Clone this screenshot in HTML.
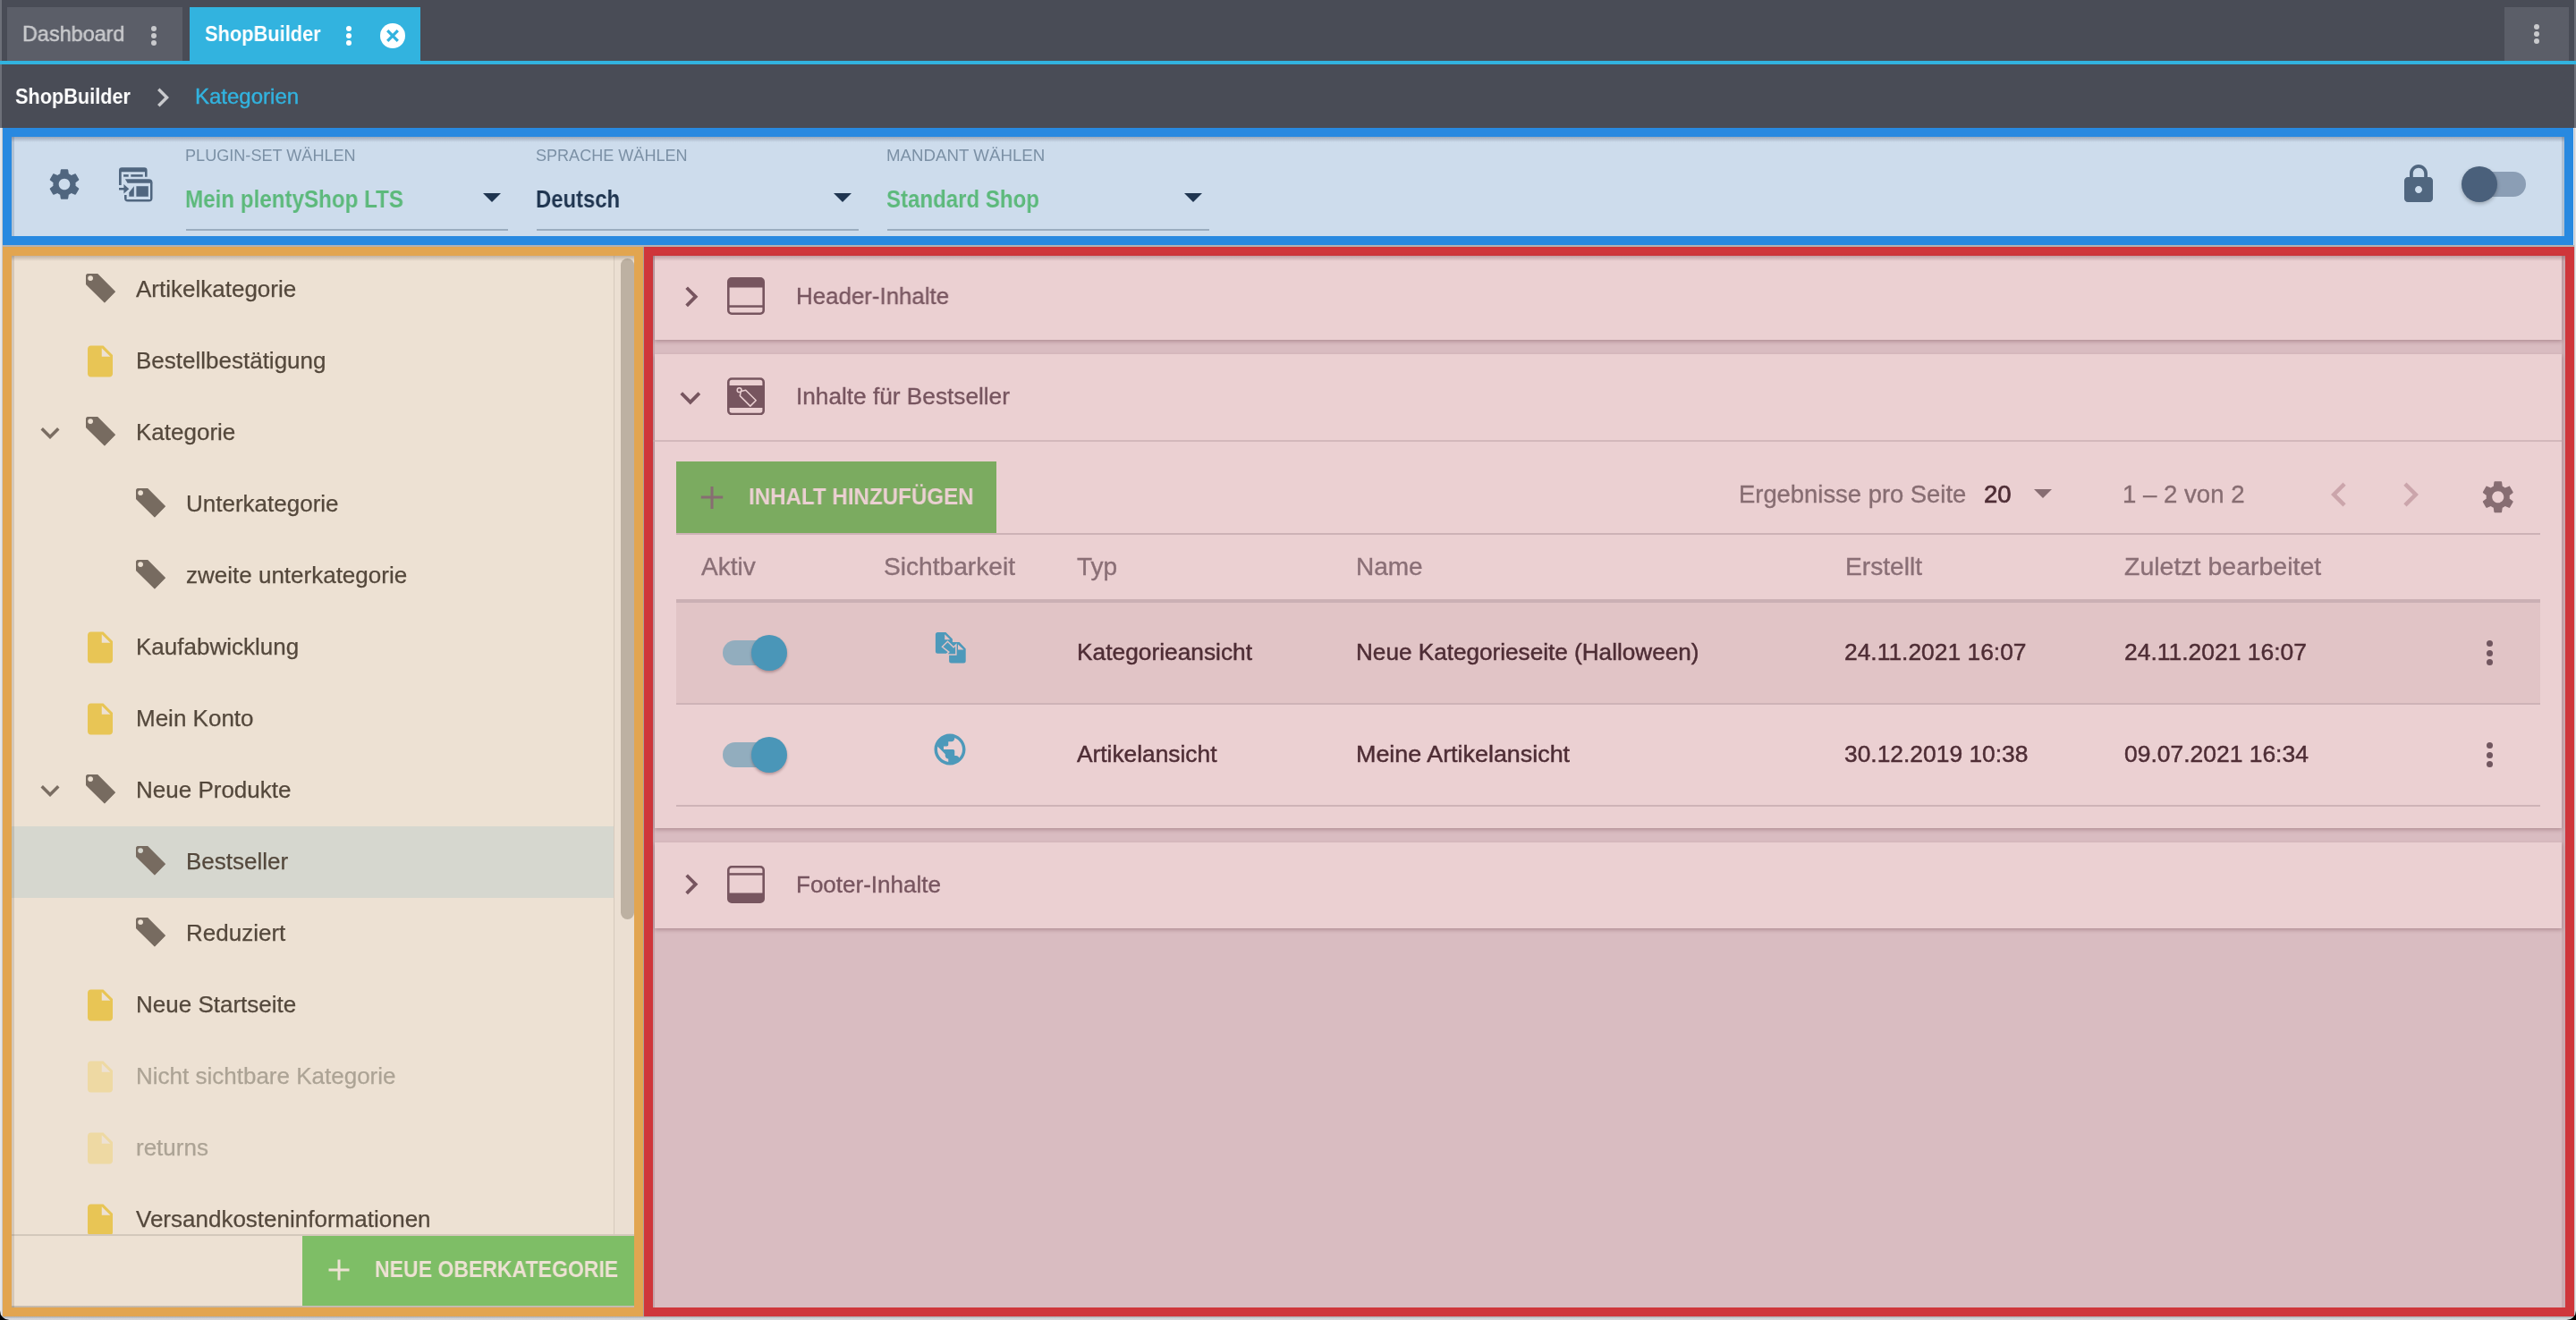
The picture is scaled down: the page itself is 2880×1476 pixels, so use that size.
<!DOCTYPE html>
<html><head><meta charset="utf-8"><title>ShopBuilder</title>
<style>
html,body{margin:0;padding:0;}
body{width:2880px;height:1476px;position:relative;overflow:hidden;background:#d9dadd;font-family:'Liberation Sans', sans-serif;}
div,svg{box-sizing:border-box;}
.t{position:absolute;white-space:nowrap;will-change:transform;}
</style></head><body>
<div style="position:absolute;left:0px;top:0px;width:2880px;height:143px;background:#494c56;"></div>
<div style="position:absolute;left:0px;top:0px;width:2px;height:143px;background:#6d7079;"></div>
<div style="position:absolute;left:2878px;top:0px;width:2px;height:143px;background:#6d7079;"></div>
<div style="position:absolute;left:8px;top:8px;width:196px;height:60px;background:#5b5e68;"></div>
<div style="position:absolute;left:212px;top:8px;width:258px;height:60px;background:#32b3df;"></div>
<div style="position:absolute;left:0px;top:68px;width:2880px;height:4px;background:#32b3df;"></div>
<div style="position:absolute;left:2800px;top:8px;width:72px;height:60px;background:#5b5e68;"></div>
<div class="t" style="left:24.5px;top:25.68px;font-size:24px;line-height:24px;font-weight:400;color:#c9cacd;transform:scaleX(0.975);transform-origin:0 0;-webkit-text-stroke:0.5px #c9cacd;">Dashboard</div>
<div style="position:absolute;left:168.90px;top:28.60px;width:6.2px;height:6.2px;border-radius:50%;background:#c9cacd;"></div>
<div style="position:absolute;left:168.90px;top:36.90px;width:6.2px;height:6.2px;border-radius:50%;background:#c9cacd;"></div>
<div style="position:absolute;left:168.90px;top:45.20px;width:6.2px;height:6.2px;border-radius:50%;background:#c9cacd;"></div>
<div class="t" style="left:229px;top:25.88px;font-size:24px;line-height:24px;font-weight:700;color:#ffffff;transform:scaleX(0.909);transform-origin:0 0;">ShopBuilder</div>
<div style="position:absolute;left:386.70px;top:28.70px;width:6.6px;height:6.6px;border-radius:50%;background:#ffffff;"></div>
<div style="position:absolute;left:386.70px;top:36.70px;width:6.6px;height:6.6px;border-radius:50%;background:#ffffff;"></div>
<div style="position:absolute;left:386.70px;top:44.70px;width:6.6px;height:6.6px;border-radius:50%;background:#ffffff;"></div>
<div style="position:absolute;left:425.00px;top:26.00px;width:28px;height:28px;border-radius:50%;background:#ffffff;"></div>
<svg style="position:absolute;left:425px;top:26px;" width="28" height="28" viewBox="0 0 28 28"><path d="M8.2 8.2 L19.8 19.8 M19.8 8.2 L8.2 19.8" stroke="#32b3df" stroke-width="3.2" stroke-linecap="butt"/></svg>
<div style="position:absolute;left:2833.00px;top:27.00px;width:6px;height:6px;border-radius:50%;background:#c9cacd;"></div>
<div style="position:absolute;left:2833.00px;top:35.00px;width:6px;height:6px;border-radius:50%;background:#c9cacd;"></div>
<div style="position:absolute;left:2833.00px;top:43.00px;width:6px;height:6px;border-radius:50%;background:#c9cacd;"></div>
<div class="t" style="left:17px;top:96.08px;font-size:24px;line-height:24px;font-weight:700;color:#ffffff;transform:scaleX(0.904);transform-origin:0 0;">ShopBuilder</div>
<svg style="position:absolute;left:161px;top:87.5px;" width="42" height="42" viewBox="0 0 24 24"><path d="M10 6L8.59 7.41 13.17 12l-4.58 4.59L10 18l6-6z" fill="#c9cacd"/></svg>
<div class="t" style="left:218.3px;top:96.08px;font-size:24px;line-height:24px;font-weight:400;color:#32b3df;-webkit-text-stroke:0.4px #32b3df;">Kategorien</div>
<div style="position:absolute;left:0px;top:143px;width:3px;height:1333px;background:#e6e7ea;"></div>
<div style="position:absolute;left:2px;top:143px;width:1px;height:1329px;background:#c9cacc;"></div>
<div style="position:absolute;left:2877px;top:143px;width:3px;height:1333px;background:#e6e7ea;"></div>
<div style="position:absolute;left:2878px;top:143px;width:1px;height:1329px;background:#c9cacc;"></div>
<div style="position:absolute;left:0px;top:1472px;width:2880px;height:4px;background:linear-gradient(#a9abae,#d3d4d7 60%,#d8d9dc);"></div>
<div style="position:absolute;left:3px;top:143px;width:2874px;height:131px;background:#cddcec;border:10px solid #2889e0;"></div>
<div style="position:absolute;left:3px;top:274px;width:2875px;height:2px;background:#b3b2b2;"></div>
<div style="position:absolute;left:13px;top:153px;width:2854px;height:6px;background:linear-gradient(rgba(40,50,70,0.30), rgba(40,50,70,0));"></div>
<div style="position:absolute;left:13px;top:153px;width:3px;height:111px;background:rgba(40,60,90,0.17);"></div>
<div style="position:absolute;left:2864px;top:153px;width:3px;height:111px;background:rgba(40,60,90,0.17);"></div>
<svg style="position:absolute;left:51px;top:185px;" width="42" height="42" viewBox="0 0 24 24"><path d="M19.14,12.94c0.04-0.3,0.06-0.61,0.06-0.94c0-0.32-0.02-0.64-0.07-0.94l2.03-1.58c0.18-0.14,0.23-0.41,0.12-0.61 l-1.92-3.32c-0.12-0.22-0.37-0.29-0.59-0.22l-2.39,0.96c-0.5-0.38-1.03-0.7-1.62-0.94L14.4,2.81c-0.04-0.24-0.24-0.41-0.48-0.41 h-3.84c-0.24,0-0.43,0.17-0.47,0.41L9.25,5.35C8.66,5.59,8.12,5.92,7.63,6.29L5.24,5.33c-0.22-0.08-0.47,0-0.59,0.22L2.74,8.87 C2.62,9.08,2.66,9.34,2.86,9.48l2.03,1.58C4.84,11.36,4.8,11.69,4.8,12s0.02,0.64,0.07,0.94l-2.03,1.58 c-0.18,0.14-0.23,0.41-0.12,0.61l1.92,3.32c0.12,0.22,0.37,0.29,0.59,0.22l2.39-0.96c0.5,0.38,1.03,0.7,1.62,0.94l0.36,2.54 c0.05,0.24,0.24,0.41,0.48,0.41h3.84c0.24,0,0.44-0.17,0.47-0.41l0.36-2.54c0.59-0.24,1.13-0.56,1.62-0.94l2.39,0.96 c0.22,0.08,0.47,0,0.59-0.22l1.92-3.32c0.12-0.22,0.07-0.47-0.12-0.61L19.14,12.94z M12,15.6c-1.98,0-3.6-1.62-3.6-3.6 s1.62-3.6,3.6-3.6s3.6,1.62,3.6,3.6S13.98,15.6,12,15.6z" fill="#50667f"/></svg>
<svg style="position:absolute;left:128px;top:182px;" width="48" height="48" viewBox="128 182 48 48">
<g fill="#50667f">
<path d="M133 207 V190.4 A3.2 3.2 0 0 1 136.2 187.2 H161.4 A3.2 3.2 0 0 1 164.6 190.4 V197.7 H162 V192.2 H135.7 V207 Z"/>
<rect x="138.1" y="195.1" width="5.6" height="2.6"/>
<rect x="146.3" y="195.1" width="13.4" height="2.6"/>
</g>
<path d="M137.6 198.6 H173 V228 H137.6 Z" fill="#cddcec"/>
<g fill="#50667f">
<path d="M139.9 200.3 H166.5 A4 4 0 0 1 170.5 204.3 V204.7 H142.6 Z"/>
<path d="M170.5 204.3 V221.5 A4 4 0 0 1 166.5 225.5 H143 A4 4 0 0 1 139 221.5 V218.1 H141.6 V223 H168 V204.3 Z"/>
<path d="M149.8 208.2 V219.8 H144.3 V215.2 Z"/>
<rect x="152.4" y="208.2" width="13.4" height="11.6"/>
</g>
<path d="M133 209.9 H138.4 V205.9 L144.3 211.2 L138.4 216.6 V212.4 H133 Z" fill="#50667f" stroke="#cddcec" stroke-width="2.2" paint-order="stroke"/>
</svg>
<div class="t" style="left:207.4px;top:165.46px;font-size:18px;line-height:18px;font-weight:400;color:#7b90a5;transform:scaleX(1.005);transform-origin:0 0;">PLUGIN-SET WÄHLEN</div>
<div class="t" style="left:207.2px;top:209.64px;font-size:27px;line-height:27px;font-weight:700;color:#5cb97b;transform:scaleX(0.89534);transform-origin:0 0;">Mein plentyShop LTS</div>
<svg style="position:absolute;left:540px;top:216px;" width="20" height="10" viewBox="0 0 20 10"><path d="M0 0 H20 L10 10z" fill="#1f3550"/></svg>
<div style="position:absolute;left:208px;top:256px;width:360px;height:2px;background:#9badbf;"></div>
<div class="t" style="left:599.4px;top:165.46px;font-size:18px;line-height:18px;font-weight:400;color:#7b90a5;transform:scaleX(1.003);transform-origin:0 0;">SPRACHE WÄHLEN</div>
<div class="t" style="left:599.2px;top:209.64px;font-size:27px;line-height:27px;font-weight:700;color:#1f3550;transform:scaleX(0.883268);transform-origin:0 0;">Deutsch</div>
<svg style="position:absolute;left:932px;top:216px;" width="20" height="10" viewBox="0 0 20 10"><path d="M0 0 H20 L10 10z" fill="#1f3550"/></svg>
<div style="position:absolute;left:600px;top:256px;width:360px;height:2px;background:#9badbf;"></div>
<div class="t" style="left:991.4px;top:165.46px;font-size:18px;line-height:18px;font-weight:400;color:#7b90a5;transform:scaleX(1.039);transform-origin:0 0;">MANDANT WÄHLEN</div>
<div class="t" style="left:991.2px;top:209.64px;font-size:27px;line-height:27px;font-weight:700;color:#5cb97b;transform:scaleX(0.89031);transform-origin:0 0;">Standard Shop</div>
<svg style="position:absolute;left:1324px;top:216px;" width="20" height="10" viewBox="0 0 20 10"><path d="M0 0 H20 L10 10z" fill="#1f3550"/></svg>
<div style="position:absolute;left:992px;top:256px;width:360px;height:2px;background:#9badbf;"></div>
<svg style="position:absolute;left:2680px;top:182px;" width="48" height="48" viewBox="0 0 24 24"><path d="M18 8h-1V6c0-2.76-2.24-5-5-5S7 3.24 7 6v2H6c-1.1 0-2 .9-2 2v10c0 1.1.9 2 2 2h12c1.1 0 2-.9 2-2V10c0-1.1-.9-2-2-2zm-6 9c-1.1 0-2-.9-2-2s.9-2 2-2 2 .9 2 2-.9 2-2 2zm3.1-9H8.9V6c0-1.71 1.39-3.1 3.1-3.1 1.71 0 3.1 1.39 3.1 3.1v2z" fill="#50667f"/></svg>
<div style="position:absolute;left:2768px;top:192px;width:56px;height:28px;background:#8b9eb5;border-radius:14px;"></div>
<div style="position:absolute;left:2752.00px;top:186.00px;width:40px;height:40px;border-radius:50%;background:#4a607b;box-shadow:0 2px 4px rgba(0,0,0,0.25);"></div>
<div style="position:absolute;left:3px;top:276px;width:716px;height:1196px;background:#ede1d3;border:10px solid #e2a550;"></div>
<div style="position:absolute;left:13px;top:286px;width:696px;height:1094px;overflow:hidden;">
<svg style="position:absolute;left:82px;top:19px;" width="35" height="35" viewBox="-1 -1 35 35"><path fill-rule="evenodd" fill="#776b60" stroke="#776b60" stroke-width="1.2" stroke-linejoin="round" d="M2.2 0.6 H13 L32.4 20.2 L20.9 31.9 L0.6 11.7 V2.2 A1.6 1.6 0 0 1 2.2 0.6 Z M5.1 1.6 A3.5 3.5 0 1 0 5.1 8.6 A3.5 3.5 0 1 0 5.1 1.6 Z"/></svg>
<div class="t" style="left:138.8px;top:23.99px;font-size:26px;line-height:26px;font-weight:400;color:#54483c;-webkit-text-stroke:0.25px #54483c;">Artikelkategorie</div>
<svg style="position:absolute;left:78px;top:96.80000000000001px;" width="42" height="42" viewBox="0 0 24 24"><path d="M6 2c-1.1 0-1.99.9-1.99 2L4 20c0 1.1.89 2 1.99 2H18c1.1 0 2-.9 2-2V8l-6-6H6zm7 7V3.5L18.5 9H13z" fill="#e8c555"/></svg>
<div class="t" style="left:138.8px;top:103.99px;font-size:26px;line-height:26px;font-weight:400;color:#54483c;-webkit-text-stroke:0.25px #54483c;">Bestellbestätigung</div>
<svg style="position:absolute;left:22px;top:177px;" width="42" height="42" viewBox="0 0 24 24"><path d="M16.59 8.59L12 13.17 7.41 8.59 6 10l6 6 6-6z" fill="#7a6d62"/></svg>
<svg style="position:absolute;left:82px;top:179px;" width="35" height="35" viewBox="-1 -1 35 35"><path fill-rule="evenodd" fill="#776b60" stroke="#776b60" stroke-width="1.2" stroke-linejoin="round" d="M2.2 0.6 H13 L32.4 20.2 L20.9 31.9 L0.6 11.7 V2.2 A1.6 1.6 0 0 1 2.2 0.6 Z M5.1 1.6 A3.5 3.5 0 1 0 5.1 8.6 A3.5 3.5 0 1 0 5.1 1.6 Z"/></svg>
<div class="t" style="left:138.8px;top:183.99px;font-size:26px;line-height:26px;font-weight:400;color:#54483c;-webkit-text-stroke:0.25px #54483c;">Kategorie</div>
<svg style="position:absolute;left:138px;top:259px;" width="35" height="35" viewBox="-1 -1 35 35"><path fill-rule="evenodd" fill="#776b60" stroke="#776b60" stroke-width="1.2" stroke-linejoin="round" d="M2.2 0.6 H13 L32.4 20.2 L20.9 31.9 L0.6 11.7 V2.2 A1.6 1.6 0 0 1 2.2 0.6 Z M5.1 1.6 A3.5 3.5 0 1 0 5.1 8.6 A3.5 3.5 0 1 0 5.1 1.6 Z"/></svg>
<div class="t" style="left:194.8px;top:263.99px;font-size:26px;line-height:26px;font-weight:400;color:#54483c;-webkit-text-stroke:0.25px #54483c;">Unterkategorie</div>
<svg style="position:absolute;left:138px;top:339px;" width="35" height="35" viewBox="-1 -1 35 35"><path fill-rule="evenodd" fill="#776b60" stroke="#776b60" stroke-width="1.2" stroke-linejoin="round" d="M2.2 0.6 H13 L32.4 20.2 L20.9 31.9 L0.6 11.7 V2.2 A1.6 1.6 0 0 1 2.2 0.6 Z M5.1 1.6 A3.5 3.5 0 1 0 5.1 8.6 A3.5 3.5 0 1 0 5.1 1.6 Z"/></svg>
<div class="t" style="left:194.8px;top:343.99px;font-size:26px;line-height:26px;font-weight:400;color:#54483c;-webkit-text-stroke:0.25px #54483c;">zweite unterkategorie</div>
<svg style="position:absolute;left:78px;top:416.79999999999995px;" width="42" height="42" viewBox="0 0 24 24"><path d="M6 2c-1.1 0-1.99.9-1.99 2L4 20c0 1.1.89 2 1.99 2H18c1.1 0 2-.9 2-2V8l-6-6H6zm7 7V3.5L18.5 9H13z" fill="#e8c555"/></svg>
<div class="t" style="left:138.8px;top:423.99px;font-size:26px;line-height:26px;font-weight:400;color:#54483c;-webkit-text-stroke:0.25px #54483c;">Kaufabwicklung</div>
<svg style="position:absolute;left:78px;top:496.79999999999995px;" width="42" height="42" viewBox="0 0 24 24"><path d="M6 2c-1.1 0-1.99.9-1.99 2L4 20c0 1.1.89 2 1.99 2H18c1.1 0 2-.9 2-2V8l-6-6H6zm7 7V3.5L18.5 9H13z" fill="#e8c555"/></svg>
<div class="t" style="left:138.8px;top:503.99px;font-size:26px;line-height:26px;font-weight:400;color:#54483c;-webkit-text-stroke:0.25px #54483c;">Mein Konto</div>
<svg style="position:absolute;left:22px;top:577px;" width="42" height="42" viewBox="0 0 24 24"><path d="M16.59 8.59L12 13.17 7.41 8.59 6 10l6 6 6-6z" fill="#7a6d62"/></svg>
<svg style="position:absolute;left:82px;top:579px;" width="35" height="35" viewBox="-1 -1 35 35"><path fill-rule="evenodd" fill="#776b60" stroke="#776b60" stroke-width="1.2" stroke-linejoin="round" d="M2.2 0.6 H13 L32.4 20.2 L20.9 31.9 L0.6 11.7 V2.2 A1.6 1.6 0 0 1 2.2 0.6 Z M5.1 1.6 A3.5 3.5 0 1 0 5.1 8.6 A3.5 3.5 0 1 0 5.1 1.6 Z"/></svg>
<div class="t" style="left:138.8px;top:583.99px;font-size:26px;line-height:26px;font-weight:400;color:#54483c;-webkit-text-stroke:0.25px #54483c;">Neue Produkte</div>
<div style="position:absolute;left:0px;top:638px;width:673px;height:80px;background:#d6d7cf;"></div>
<svg style="position:absolute;left:138px;top:659px;" width="35" height="35" viewBox="-1 -1 35 35"><path fill-rule="evenodd" fill="#776b60" stroke="#776b60" stroke-width="1.2" stroke-linejoin="round" d="M2.2 0.6 H13 L32.4 20.2 L20.9 31.9 L0.6 11.7 V2.2 A1.6 1.6 0 0 1 2.2 0.6 Z M5.1 1.6 A3.5 3.5 0 1 0 5.1 8.6 A3.5 3.5 0 1 0 5.1 1.6 Z"/></svg>
<div class="t" style="left:194.8px;top:663.99px;font-size:26px;line-height:26px;font-weight:400;color:#54483c;-webkit-text-stroke:0.25px #54483c;">Bestseller</div>
<svg style="position:absolute;left:138px;top:739px;" width="35" height="35" viewBox="-1 -1 35 35"><path fill-rule="evenodd" fill="#776b60" stroke="#776b60" stroke-width="1.2" stroke-linejoin="round" d="M2.2 0.6 H13 L32.4 20.2 L20.9 31.9 L0.6 11.7 V2.2 A1.6 1.6 0 0 1 2.2 0.6 Z M5.1 1.6 A3.5 3.5 0 1 0 5.1 8.6 A3.5 3.5 0 1 0 5.1 1.6 Z"/></svg>
<div class="t" style="left:194.8px;top:743.99px;font-size:26px;line-height:26px;font-weight:400;color:#54483c;-webkit-text-stroke:0.25px #54483c;">Reduziert</div>
<svg style="position:absolute;left:78px;top:816.8px;" width="42" height="42" viewBox="0 0 24 24"><path d="M6 2c-1.1 0-1.99.9-1.99 2L4 20c0 1.1.89 2 1.99 2H18c1.1 0 2-.9 2-2V8l-6-6H6zm7 7V3.5L18.5 9H13z" fill="#e8c555"/></svg>
<div class="t" style="left:138.8px;top:823.99px;font-size:26px;line-height:26px;font-weight:400;color:#54483c;-webkit-text-stroke:0.25px #54483c;">Neue Startseite</div>
<svg style="position:absolute;left:78px;top:896.8px;" width="42" height="42" viewBox="0 0 24 24"><path d="M6 2c-1.1 0-1.99.9-1.99 2L4 20c0 1.1.89 2 1.99 2H18c1.1 0 2-.9 2-2V8l-6-6H6zm7 7V3.5L18.5 9H13z" fill="#eed9a3"/></svg>
<div class="t" style="left:138.8px;top:903.99px;font-size:26px;line-height:26px;font-weight:400;color:#aca395;-webkit-text-stroke:0.25px #aca395;">Nicht sichtbare Kategorie</div>
<svg style="position:absolute;left:78px;top:976.8px;" width="42" height="42" viewBox="0 0 24 24"><path d="M6 2c-1.1 0-1.99.9-1.99 2L4 20c0 1.1.89 2 1.99 2H18c1.1 0 2-.9 2-2V8l-6-6H6zm7 7V3.5L18.5 9H13z" fill="#eed9a3"/></svg>
<div class="t" style="left:138.8px;top:983.99px;font-size:26px;line-height:26px;font-weight:400;color:#aca395;-webkit-text-stroke:0.25px #aca395;">returns</div>
<svg style="position:absolute;left:78px;top:1056.8px;" width="42" height="42" viewBox="0 0 24 24"><path d="M6 2c-1.1 0-1.99.9-1.99 2L4 20c0 1.1.89 2 1.99 2H18c1.1 0 2-.9 2-2V8l-6-6H6zm7 7V3.5L18.5 9H13z" fill="#e8c555"/></svg>
<div class="t" style="left:138.8px;top:1063.99px;font-size:26px;line-height:26px;font-weight:400;color:#54483c;-webkit-text-stroke:0.25px #54483c;">Versandkosteninformationen</div>
</div>
<div style="position:absolute;left:686px;top:286px;width:23px;height:1094px;background:#ebdfd2;border-left:1px solid #d6cabd;"></div>
<div style="position:absolute;left:694px;top:289px;width:15px;height:739px;background:#bdb1a2;border-radius:7.5px;"></div>
<div style="position:absolute;left:13px;top:1380px;width:696px;height:2px;background:#d3c8bb;"></div>
<div style="position:absolute;left:13px;top:1460px;width:696px;height:2px;background:linear-gradient(#cfc4b7,#bcb1a3);"></div>
<div style="position:absolute;left:338px;top:1382px;width:371px;height:78px;background:#7ebe66;"></div>
<svg style="position:absolute;left:365px;top:1406px;" width="28" height="28" viewBox="0 0 28 28"><path d="M14 2.5 V25.5 M2.5 14 H25.5" stroke="#ede1d3" stroke-width="3"/></svg>
<div class="t" style="left:419px;top:1405.99px;font-size:26px;line-height:26px;font-weight:700;color:#ede1d3;transform:scaleX(0.886);transform-origin:0 0;">NEUE OBERKATEGORIE</div>
<div style="position:absolute;left:13px;top:286px;width:696px;height:6px;background:linear-gradient(rgba(70,50,30,0.26), rgba(70,50,30,0));"></div>
<div style="position:absolute;left:13px;top:286px;width:3px;height:1176px;background:rgba(70,50,30,0.14);"></div>
<div style="position:absolute;left:720px;top:276px;width:2158px;height:1196px;background:#d9bcc1;border:10px solid #cf363b;"></div>
<div style="position:absolute;left:719px;top:276px;width:1px;height:1196px;background:#a99d97;"></div>
<div style="position:absolute;left:732px;top:286px;width:2132px;height:94px;background:#ebd0d2;box-shadow:0 2px 4px rgba(80,30,40,0.28);"></div>
<div style="position:absolute;left:732px;top:396px;width:2132px;height:530px;background:#ebd0d2;box-shadow:0 2px 4px rgba(80,30,40,0.28);"></div>
<div style="position:absolute;left:732px;top:942px;width:2132px;height:96px;background:#ebd0d2;box-shadow:0 2px 4px rgba(80,30,40,0.28);"></div>
<svg style="position:absolute;left:750px;top:309.1px;" width="45.6" height="45.6" viewBox="0 0 24 24"><path d="M10 6L8.59 7.41 13.17 12l-4.58 4.59L10 18l6-6z" fill="#77555f"/></svg>
<svg style="position:absolute;left:813px;top:309.7px;" width="42" height="42" viewBox="0 0 42 42"><g fill="#77555f" fill-rule="evenodd"><path d="M5 0 H37 A5 5 0 0 1 42 5 V37 A5 5 0 0 1 37 42 H5 A5 5 0 0 1 0 37 V5 A5 5 0 0 1 5 0z M2.6 11.5 V36.8 A2.6 2.6 0 0 0 5.2 39.4 H36.8 A2.6 2.6 0 0 0 39.4 36.8 V11.5z"/><rect x="2" y="31.3" width="38" height="2.5"/></g></svg>
<div class="t" style="left:889.5px;top:317.99px;font-size:26px;line-height:26px;font-weight:400;color:#77555f;transform:scaleX(0.995);transform-origin:0 0;-webkit-text-stroke:0.35px #77555f;">Header-Inhalte</div>
<svg style="position:absolute;left:748.7px;top:421.5px;" width="45.6" height="45.6" viewBox="0 0 24 24"><path d="M16.59 8.59L12 13.17 7.41 8.59 6 10l6 6 6-6z" fill="#77555f"/></svg>
<svg style="position:absolute;left:813px;top:421.7px;" width="42" height="42.5" viewBox="0 0 42 42"><g fill="#77555f" fill-rule="evenodd"><path d="M5 0 H37 A5 5 0 0 1 42 5 V37 A5 5 0 0 1 37 42 H5 A5 5 0 0 1 0 37 V5 A5 5 0 0 1 5 0z M2.6 5.2 A2.6 2.6 0 0 1 5.2 2.6 H36.8 A2.6 2.6 0 0 1 39.4 5.2 V8.8 H2.6z M2.6 33.8 H39.4 V36.8 A2.6 2.6 0 0 1 36.8 39.4 H5.2 A2.6 2.6 0 0 1 2.6 36.8z"/></g>
<g fill="none" stroke="#ebd0d2" stroke-width="1.5" stroke-linejoin="round"><path d="M15.4 15.2 L20.7 14 L32.2 25.5 L25.8 31.9 L14.3 20.4 Z"/><circle cx="13.6" cy="13.9" r="2.4"/></g></svg>
<div class="t" style="left:889.5px;top:430.49px;font-size:26px;line-height:26px;font-weight:400;color:#77555f;transform:scaleX(1.008);transform-origin:0 0;-webkit-text-stroke:0.35px #77555f;">Inhalte für Bestseller</div>
<div style="position:absolute;left:730px;top:492px;width:2134px;height:2px;background:#d3b8bb;"></div>
<div style="position:absolute;left:756px;top:516px;width:358px;height:80px;background:#7bab60;"></div>
<svg style="position:absolute;left:782px;top:542px;" width="28" height="28" viewBox="0 0 28 28"><path d="M14 2 V27 M1.8 14 H26.2" stroke="#876d72" stroke-width="3"/></svg>
<div class="t" style="left:837px;top:541.99px;font-size:26px;line-height:26px;font-weight:700;color:#ebd0d2;transform:scaleX(0.928);transform-origin:0 0;">INHALT HINZUFÜGEN</div>
<div class="t" style="left:1944px;top:538.81px;font-size:27.4px;line-height:27.4px;font-weight:400;color:#876d72;-webkit-text-stroke:0.35px #876d72;">Ergebnisse pro Seite</div>
<div class="t" style="left:2217.5px;top:538.72px;font-size:27.5px;line-height:27.5px;font-weight:400;color:#4e2d35;-webkit-text-stroke:0.7px #4e2d35;">20</div>
<svg style="position:absolute;left:2274px;top:546.5px;" width="20" height="10" viewBox="0 0 20 10"><path d="M0 0 H20 L10 10z" fill="#876d72"/></svg>
<div class="t" style="left:2372.5px;top:538.64px;font-size:27.6px;line-height:27.6px;font-weight:400;color:#876d72;-webkit-text-stroke:0.35px #876d72;">1 – 2 von 2</div>
<svg style="position:absolute;left:2588px;top:525.5px;" width="54" height="54" viewBox="0 0 24 24"><path d="M15.41 7.41L14 6l-6 6 6 6 1.41-1.41L10.83 12z" fill="#cba5ab"/></svg>
<svg style="position:absolute;left:2667.7px;top:525.5px;" width="54" height="54" viewBox="0 0 24 24"><path d="M10 6L8.59 7.41 13.17 12l-4.58 4.59L10 18l6-6z" fill="#cba5ab"/></svg>
<svg style="position:absolute;left:2770.5px;top:534px;" width="43.5" height="43.5" viewBox="0 0 24 24"><path d="M19.14,12.94c0.04-0.3,0.06-0.61,0.06-0.94c0-0.32-0.02-0.64-0.07-0.94l2.03-1.58c0.18-0.14,0.23-0.41,0.12-0.61 l-1.92-3.32c-0.12-0.22-0.37-0.29-0.59-0.22l-2.39,0.96c-0.5-0.38-1.03-0.7-1.62-0.94L14.4,2.81c-0.04-0.24-0.24-0.41-0.48-0.41 h-3.84c-0.24,0-0.43,0.17-0.47,0.41L9.25,5.35C8.66,5.59,8.12,5.92,7.63,6.29L5.24,5.33c-0.22-0.08-0.47,0-0.59,0.22L2.74,8.87 C2.62,9.08,2.66,9.34,2.86,9.48l2.03,1.58C4.84,11.36,4.8,11.69,4.8,12s0.02,0.64,0.07,0.94l-2.03,1.58 c-0.18,0.14-0.23,0.41-0.12,0.61l1.92,3.32c0.12,0.22,0.37,0.29,0.59,0.22l2.39-0.96c0.5,0.38,1.03,0.7,1.62,0.94l0.36,2.54 c0.05,0.24,0.24,0.41,0.48,0.41h3.84c0.24,0,0.44-0.17,0.47-0.41l0.36-2.54c0.59-0.24,1.13-0.56,1.62-0.94l2.39,0.96 c0.22,0.08,0.47,0,0.59-0.22l1.92-3.32c0.12-0.22,0.07-0.47-0.12-0.61L19.14,12.94z M12,15.6c-1.98,0-3.6-1.62-3.6-3.6 s1.62-3.6,3.6-3.6s3.6,1.62,3.6,3.6S13.98,15.6,12,15.6z" fill="#876d72"/></svg>
<div style="position:absolute;left:756px;top:596px;width:2084px;height:2px;background:#cdb2b6;"></div>
<div class="t" style="left:784.3px;top:619.90px;font-size:28px;line-height:28px;font-weight:400;color:#8a6f76;-webkit-text-stroke:0.35px #8a6f76;">Aktiv</div>
<div class="t" style="left:988px;top:619.90px;font-size:28px;line-height:28px;font-weight:400;color:#8a6f76;transform:scaleX(1.005);transform-origin:0 0;-webkit-text-stroke:0.35px #8a6f76;">Sichtbarkeit</div>
<div class="t" style="left:1204.3px;top:619.90px;font-size:28px;line-height:28px;font-weight:400;color:#8a6f76;-webkit-text-stroke:0.35px #8a6f76;">Typ</div>
<div class="t" style="left:1516px;top:619.90px;font-size:28px;line-height:28px;font-weight:400;color:#8a6f76;-webkit-text-stroke:0.35px #8a6f76;">Name</div>
<div class="t" style="left:2062.5px;top:619.90px;font-size:28px;line-height:28px;font-weight:400;color:#8a6f76;transform:scaleX(1.005);transform-origin:0 0;-webkit-text-stroke:0.35px #8a6f76;">Erstellt</div>
<div class="t" style="left:2375px;top:619.90px;font-size:28px;line-height:28px;font-weight:400;color:#8a6f76;transform:scaleX(1.018);transform-origin:0 0;-webkit-text-stroke:0.35px #8a6f76;">Zuletzt bearbeitet</div>
<div style="position:absolute;left:756px;top:670px;width:2084px;height:4px;background:#cbb0b4;"></div>
<div style="position:absolute;left:756px;top:674px;width:2084px;height:112px;background:#e1c4c6;"></div>
<div style="position:absolute;left:756px;top:786px;width:2084px;height:2px;background:#ceb3b7;"></div>
<div style="position:absolute;left:756px;top:900px;width:2084px;height:2px;background:#ceb3b7;"></div>
<div style="position:absolute;left:808px;top:716px;width:64px;height:28px;background:#92adbe;border-radius:14px;"></div>
<div style="position:absolute;left:840.00px;top:710.00px;width:40px;height:40px;border-radius:50%;background:#4a96b8;box-shadow:0 2px 3px rgba(60,20,30,0.3);"></div>
<svg style="position:absolute;left:1040px;top:700px;" width="46" height="46" viewBox="0 0 46 46"><g fill="#4d99ba" fill-rule="evenodd">
<path d="M8.4 7 H17.4 L24.9 14.6 V28.3 A2.5 2.5 0 0 1 22.4 30.8 H8.4 A2.5 2.5 0 0 1 5.9 28.3 V9.5 A2.5 2.5 0 0 1 8.4 7 Z M16.2 9.2 V15.3 H22.3 Z"/>
<path d="M23.6 18.1 H32.6 L39.7 25.4 V39.1 A2.5 2.5 0 0 1 37.2 41.6 H23.6 A2.5 2.5 0 0 1 21.1 39.1 V20.6 A2.5 2.5 0 0 1 23.6 18.1 Z M31 20.6 V26.5 H37.5 Z"/>
</g>
<path d="M13.4 23.3 L19.5 17.2 L26.1 23.8 L28.9 21 V31.9 H18 L20.8 29.1 Z" fill="#4d99ba" stroke="#e1c4c6" stroke-width="1.5" stroke-linejoin="miter"/></svg>
<div class="t" style="left:1203.5px;top:715.99px;font-size:26px;line-height:26px;font-weight:400;color:#4e2d35;transform:scaleX(1.012);transform-origin:0 0;-webkit-text-stroke:0.45px #4e2d35;">Kategorieansicht</div>
<div class="t" style="left:1515.8px;top:715.99px;font-size:26px;line-height:26px;font-weight:400;color:#4e2d35;transform:scaleX(1.005);transform-origin:0 0;-webkit-text-stroke:0.45px #4e2d35;">Neue Kategorieseite (Halloween)</div>
<div class="t" style="left:2062.2px;top:715.99px;font-size:26px;line-height:26px;font-weight:400;color:#4e2d35;transform:scaleX(1.015);transform-origin:0 0;-webkit-text-stroke:0.45px #4e2d35;">24.11.2021 16:07</div>
<div class="t" style="left:2374.5px;top:715.99px;font-size:26px;line-height:26px;font-weight:400;color:#4e2d35;transform:scaleX(1.017);transform-origin:0 0;-webkit-text-stroke:0.45px #4e2d35;">24.11.2021 16:07</div>
<div style="position:absolute;left:2779.90px;top:715.85px;width:7px;height:7px;border-radius:50%;background:#71565f;"></div>
<div style="position:absolute;left:2779.90px;top:726.50px;width:7px;height:7px;border-radius:50%;background:#71565f;"></div>
<div style="position:absolute;left:2779.90px;top:737.15px;width:7px;height:7px;border-radius:50%;background:#71565f;"></div>
<div style="position:absolute;left:808px;top:830px;width:64px;height:28px;background:#92adbe;border-radius:14px;"></div>
<div style="position:absolute;left:840.00px;top:824.00px;width:40px;height:40px;border-radius:50%;background:#4a96b8;box-shadow:0 2px 3px rgba(60,20,30,0.3);"></div>
<svg style="position:absolute;left:1041.2px;top:816.7px;" width="42" height="42" viewBox="0 0 24 24"><path d="M12 2C6.48 2 2 6.48 2 12s4.48 10 10 10 10-4.48 10-10S17.52 2 12 2zm-1 17.93c-3.95-.49-7-3.85-7-7.93 0-.62.08-1.21.21-1.79L9 15v1c0 1.1.9 2 2 2v1.93zm6.9-2.54c-.26-.81-1-1.39-1.9-1.39h-1v-3c0-.55-.45-1-1-1H8v-2h2c.55 0 1-.45 1-1V7h2c1.1 0 2-.9 2-2v-.41c2.93 1.19 5 4.06 5 7.41 0 2.08-.8 3.97-2.1 5.39z" fill="#4d99ba"/></svg>
<div class="t" style="left:1203.5px;top:829.99px;font-size:26px;line-height:26px;font-weight:400;color:#4e2d35;transform:scaleX(1.012);transform-origin:0 0;-webkit-text-stroke:0.45px #4e2d35;">Artikelansicht</div>
<div class="t" style="left:1515.8px;top:829.99px;font-size:26px;line-height:26px;font-weight:400;color:#4e2d35;transform:scaleX(1.034);transform-origin:0 0;-webkit-text-stroke:0.45px #4e2d35;">Meine Artikelansicht</div>
<div class="t" style="left:2062.2px;top:829.99px;font-size:26px;line-height:26px;font-weight:400;color:#4e2d35;transform:scaleX(1.015);transform-origin:0 0;-webkit-text-stroke:0.45px #4e2d35;">30.12.2019 10:38</div>
<div class="t" style="left:2374.5px;top:829.99px;font-size:26px;line-height:26px;font-weight:400;color:#4e2d35;transform:scaleX(1.017);transform-origin:0 0;-webkit-text-stroke:0.45px #4e2d35;">09.07.2021 16:34</div>
<div style="position:absolute;left:2779.90px;top:829.85px;width:7px;height:7px;border-radius:50%;background:#71565f;"></div>
<div style="position:absolute;left:2779.90px;top:840.50px;width:7px;height:7px;border-radius:50%;background:#71565f;"></div>
<div style="position:absolute;left:2779.90px;top:851.15px;width:7px;height:7px;border-radius:50%;background:#71565f;"></div>
<svg style="position:absolute;left:750px;top:965.8px;" width="45.6" height="45.6" viewBox="0 0 24 24"><path d="M10 6L8.59 7.41 13.17 12l-4.58 4.59L10 18l6-6z" fill="#77555f"/></svg>
<svg style="position:absolute;left:813px;top:967.7px;" width="42" height="42" viewBox="0 0 42 42"><g fill="#77555f" fill-rule="evenodd"><path d="M5 0 H37 A5 5 0 0 1 42 5 V37 A5 5 0 0 1 37 42 H5 A5 5 0 0 1 0 37 V5 A5 5 0 0 1 5 0z M2.6 5.2 A2.6 2.6 0 0 1 5.2 2.6 H36.8 A2.6 2.6 0 0 1 39.4 5.2 V30.5 H2.6z"/><rect x="2" y="8.2" width="38" height="2.5"/></g></svg>
<div class="t" style="left:889.5px;top:975.79px;font-size:26px;line-height:26px;font-weight:400;color:#77555f;-webkit-text-stroke:0.35px #77555f;">Footer-Inhalte</div>
<div style="position:absolute;left:730px;top:286px;width:2138px;height:6px;background:linear-gradient(rgba(80,30,40,0.28), rgba(80,30,40,0));"></div>
<div style="position:absolute;left:730px;top:286px;width:2px;height:1176px;background:rgba(80,30,40,0.14);"></div>
<div style="position:absolute;left:2864px;top:286px;width:4px;height:1176px;background:rgba(80,30,40,0.10);"></div>
<svg style="position:absolute;left:0px;top:1464px;" width="12" height="12" viewBox="0 1464 12 12"><path d="M0 1465.5 A10.5 10.5 0 0 0 10.5 1476 H0 Z" fill="#000"/></svg>
<svg style="position:absolute;left:2868px;top:1464px;" width="12" height="12" viewBox="2868 1464 12 12"><path d="M2880 1465.5 A10.5 10.5 0 0 1 2869.5 1476 H2880 Z" fill="#000"/></svg>
</body></html>
